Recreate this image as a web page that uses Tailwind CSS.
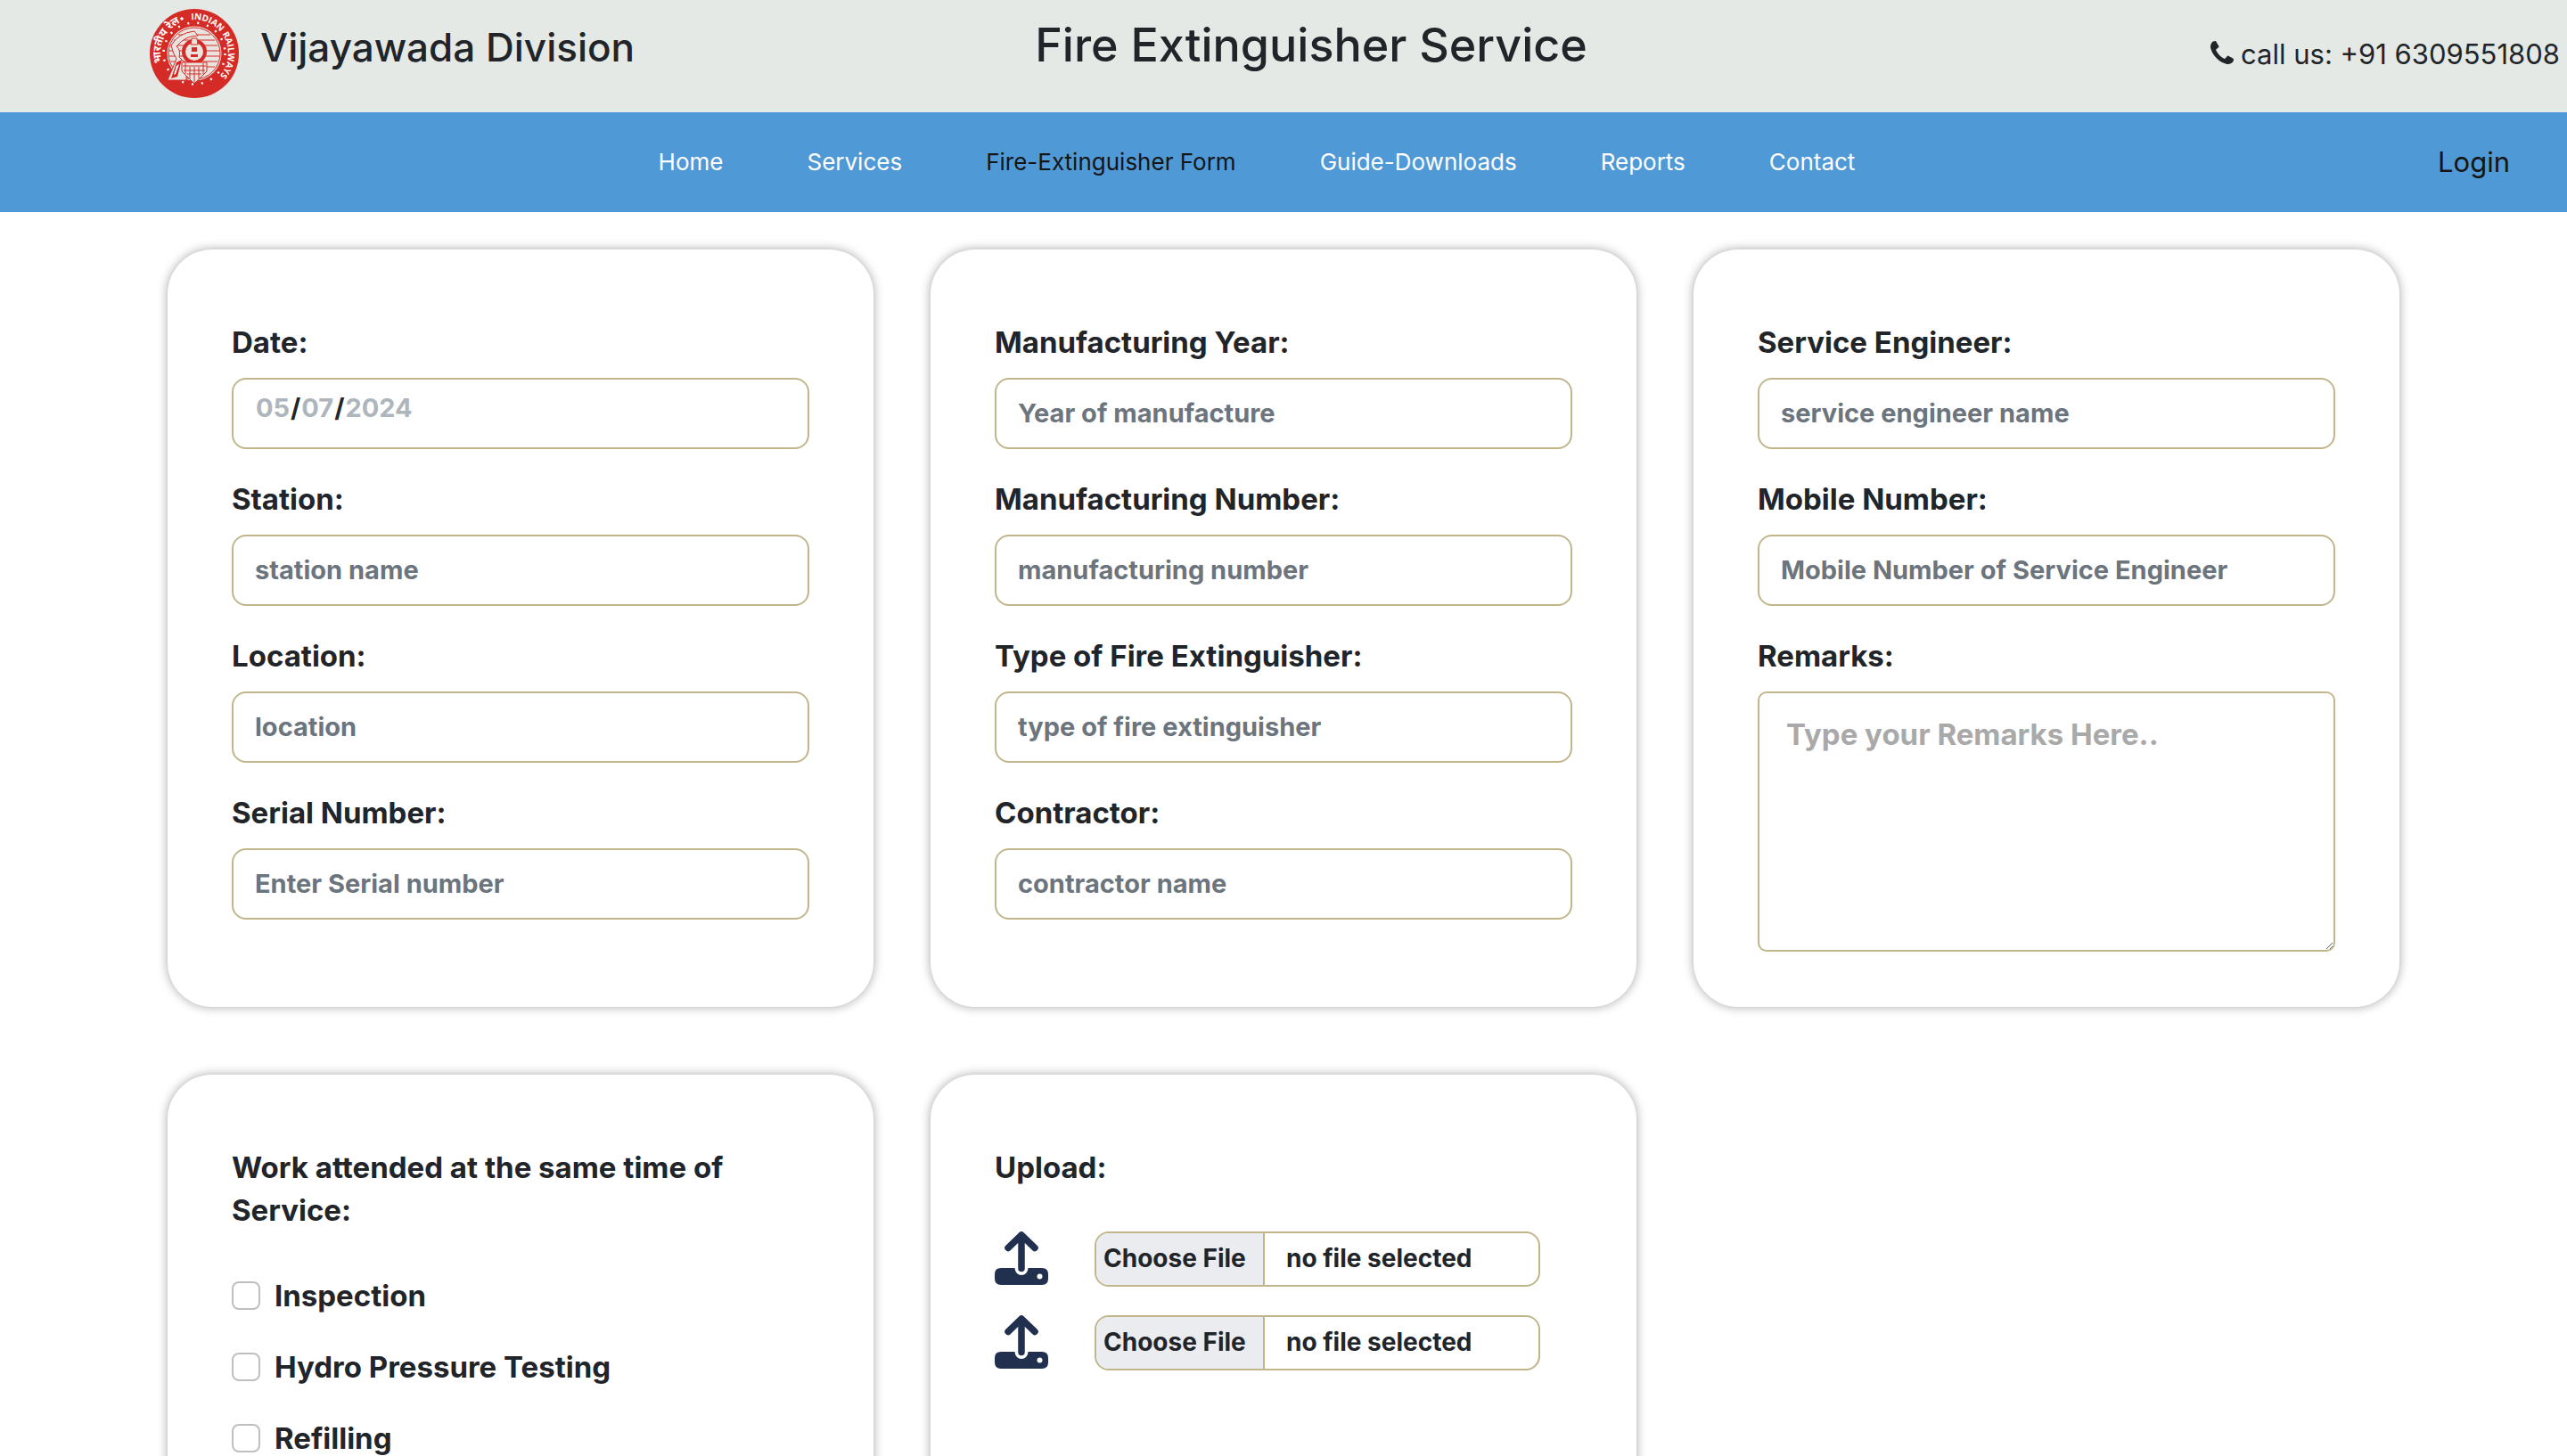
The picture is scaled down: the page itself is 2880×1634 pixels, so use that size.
<!DOCTYPE html>
<html lang="en-US">
<head>
<meta charset="utf-8">
<meta name="viewport" content="width=device-width, initial-scale=1">
<title>Fire Extinguisher Service</title>
<script src="https://cdn.jsdelivr.net/npm/@tailwindcss/browser@4"></script>
</head>
<body class="bg-white font-['Inter','Liberation_Sans',sans-serif] text-[#212529]">

<header class="grid h-[126px] grid-cols-[1fr_auto_1fr] bg-[#e4e9e5] pr-2 pl-[70px]">
  <div class="ml-[98px] flex items-start gap-6 pt-[10px]">
    <svg class="size-[100px] shrink-0" viewBox="0 0 100 100" role="img" aria-label="Indian Railways logo">
      <defs>
        <path id="ring-right" d="M12 50A38 38 0 0 1 88 50A38 38 0 0 1 50 88"/>
        <path id="ring-left" d="M50 88A38 38 0 0 1 12 50A38 38 0 0 1 50 12"/>
      </defs>
      <circle cx="50" cy="50" r="50" fill="#d52b27"/>
      <text font-family="Open Sans, sans-serif" font-weight="700" font-size="10" fill="#fff"><textPath href="#ring-right" startOffset="56">INDIAN RAILWAYS</textPath></text>
      <text font-family="Noto Sans Devanagari, Noto Sans, sans-serif" font-weight="700" font-size="12" fill="#fff"><textPath href="#ring-left" startOffset="49">भारतीय रेल</textPath></text>
      <circle cx="36" cy="11" r="1.8" fill="#fff"/>
      <circle cx="50" cy="50" r="34.500" fill="none" stroke="#fff" stroke-width="2.500" stroke-dasharray="2 9.040"/>
      <circle cx="50" cy="50" r="30.500" fill="#e9e4e0"/>
      <circle cx="50" cy="50" r="29" fill="none" stroke="#d52b27" stroke-width="1"/>
      <path d="M32 29H68M27 35H73M24 41H76M22 47H78M22 53H78M24 59H76M27 65H73" stroke="#d52b27" stroke-width="1"/>
      <path d="M24 41Q32 27 50 25L54 30Q40 30 30 42Q35 46 33 54L41 62V80H20L30 56Q26 50 24 41Z" fill="#e9e4e0" stroke="#d52b27" stroke-width="1"/>
      <circle cx="50" cy="48" r="14" fill="#d52b27"/>
      <circle cx="50" cy="48" r="10" fill="#e9e4e0"/>
      <path d="M47 33H53L54 40H46Z" fill="#e9e4e0" stroke="#d52b27"/>
      <path d="M47 43H53V48H47ZM46 51H54V54H46Z" fill="#d52b27"/>
      <path d="M36 60H64V70L50 84L36 70Z" fill="#e9e4e0" stroke="#d52b27"/>
      <path d="M37 64H63M38 69H62M42 73H58M40 61V73M45 65V78M50 65V83M55 65V78M60 61V73" stroke="#d52b27"/>
      <path d="M30 60L36 57L31 76L24 78Z" fill="#d52b27"/>
      <path d="M30 64L33 62L29 73L27 74Z" fill="#fff"/>
    </svg>
    <p class="pt-2 text-[44px] leading-[70px] font-medium whitespace-nowrap">Vijayawada Division</p>
  </div>
  <h1 class="pt-4 text-[52px] leading-[70px] font-medium whitespace-nowrap">Fire Extinguisher Service</h1>
  <p class="flex items-start justify-end gap-2 pt-9 text-[31px] leading-[50px] whitespace-nowrap">
    <svg class="mt-[10px] size-[26px]" viewBox="192 128 1408 1408" fill="currentColor" aria-hidden="true"><path d="M1600 1240q0 27-10 70.500t-21 68.500q-21 50-122 106-94 51-186 51-27 0-53-3.500t-57.500-12.500-47-14.500-55.500-20.500-49-18q-98-35-175-83-127-79-264-216t-216-264q-48-77-83-175-3-9-18-49t-20.500-55.500-14.500-47-12.500-57.500-3.500-53q0-92 51-186 56-101 106-122 25-11 68.500-21t70.500-10q14 0 21 3 18 6 53 76 11 19 30 54t35 63.500 31 53.500q3 4 17.500 25t21.500 35.500 7 28.500q0 20-28.500 50t-62 55-62 53-28.500 46q0 9 5 22.500t8.500 20.500 14 24 11.500 19q76 137 174 235t235 174q2 1 19 11.500t24 14 20.500 8.500 22.500 5q18 0 46-28.500t53-62 55-62 50-28.500q14 0 28.500 7t35.500 21.500 25 17.500q25 15 53.500 31t63.500 35 54 30q70 35 76 53 3 7 3 21z"/></svg>
    <span>call us: +91 6309551808</span>
  </p>
</header>

<nav class="grid h-28 grid-cols-[1fr_auto_1fr] items-center bg-[#4f9ad6] pr-16 pl-1 text-[26px] leading-[40px] text-white">
  <div class="col-start-2 flex gap-[94px] whitespace-nowrap">
    <a href="#home">Home</a>
    <a href="#services">Services</a>
    <a href="#form" class="text-[#151515]" aria-current="page">Fire-Extinguisher Form</a>
    <a href="#downloads">Guide-Downloads</a>
    <a href="#reports">Reports</a>
    <a href="#contact">Contact</a>
  </div>
  <a href="#login" class="justify-self-end text-[31px] text-[#151515]">Login</a>
</nav>

<main class="px-[188px] pt-[42px]">
  <form class="grid grid-cols-3 gap-x-16 gap-y-[76px] text-[33px] leading-[48px] font-bold">

    <section class="flex min-h-[850px] flex-col gap-8 rounded-[50px] px-[72px] pt-20 pb-[60px] shadow-[0_0_12px_rgba(0,0,0,0.35)]">
      <div class="flex flex-col gap-4">
        <label for="date">Date:</label>
        <input id="date" type="date" value="2024-05-07" class="h-20 w-full rounded-2xl border-2 border-[#c0b58b] px-6 pb-3 text-[29px] text-[#212529] [&::-webkit-calendar-picker-indicator]:hidden [&::-webkit-datetime-edit-day-field]:text-[#adb5bd] [&::-webkit-datetime-edit-month-field]:text-[#adb5bd] [&::-webkit-datetime-edit-year-field]:text-[#adb5bd]">
      </div>
      <div class="flex flex-col gap-4">
        <label for="station">Station:</label>
        <input id="station" type="text" placeholder="station name" class="h-20 w-full rounded-2xl border-2 border-[#c0b58b] px-6 pb-0.5 text-[29px] placeholder:text-[#6c757d]">
      </div>
      <div class="flex flex-col gap-4">
        <label for="location">Location:</label>
        <input id="location" type="text" placeholder="location" class="h-20 w-full rounded-2xl border-2 border-[#c0b58b] px-6 pb-0.5 text-[29px] placeholder:text-[#6c757d]">
      </div>
      <div class="flex flex-col gap-4">
        <label for="serial">Serial Number:</label>
        <input id="serial" type="text" placeholder="Enter Serial number" class="h-20 w-full rounded-2xl border-2 border-[#c0b58b] px-6 pb-0.5 text-[29px] placeholder:text-[#6c757d]">
      </div>
    </section>

    <section class="flex min-h-[850px] flex-col gap-8 rounded-[50px] px-[72px] pt-20 pb-[60px] shadow-[0_0_12px_rgba(0,0,0,0.35)]">
      <div class="flex flex-col gap-4">
        <label for="mfg-year">Manufacturing Year:</label>
        <input id="mfg-year" type="text" placeholder="Year of manufacture" class="h-20 w-full rounded-2xl border-2 border-[#c0b58b] px-6 pb-0.5 text-[29px] placeholder:text-[#6c757d]">
      </div>
      <div class="flex flex-col gap-4">
        <label for="mfg-number">Manufacturing Number:</label>
        <input id="mfg-number" type="text" placeholder="manufacturing number" class="h-20 w-full rounded-2xl border-2 border-[#c0b58b] px-6 pb-0.5 text-[29px] placeholder:text-[#6c757d]">
      </div>
      <div class="flex flex-col gap-4">
        <label for="type">Type of Fire Extinguisher:</label>
        <input id="type" type="text" placeholder="type of fire extinguisher" class="h-20 w-full rounded-2xl border-2 border-[#c0b58b] px-6 pb-0.5 text-[29px] placeholder:text-[#6c757d]">
      </div>
      <div class="flex flex-col gap-4">
        <label for="contractor">Contractor:</label>
        <input id="contractor" type="text" placeholder="contractor name" class="h-20 w-full rounded-2xl border-2 border-[#c0b58b] px-6 pb-0.5 text-[29px] placeholder:text-[#6c757d]">
      </div>
    </section>

    <section class="flex min-h-[850px] flex-col gap-8 rounded-[50px] px-[72px] pt-20 pb-[60px] shadow-[0_0_12px_rgba(0,0,0,0.35)]">
      <div class="flex flex-col gap-4">
        <label for="engineer">Service Engineer:</label>
        <input id="engineer" type="text" placeholder="service engineer name" class="h-20 w-full rounded-2xl border-2 border-[#c0b58b] px-6 pb-0.5 text-[29px] placeholder:text-[#6c757d]">
      </div>
      <div class="flex flex-col gap-4">
        <label for="mobile">Mobile Number:</label>
        <input id="mobile" type="tel" placeholder="Mobile Number of Service Engineer" class="h-20 w-full rounded-2xl border-2 border-[#c0b58b] px-6 pb-0.5 text-[29px] placeholder:text-[#6c757d]">
      </div>
      <div class="flex flex-col gap-4">
        <label for="remarks">Remarks:</label>
        <textarea id="remarks" placeholder="Type your Remarks Here.." class="h-[292px] w-full rounded-[10px] border-2 border-[#c0b58b] px-[30px] py-[22px] placeholder:text-[#a9a9a9]"></textarea>
      </div>
    </section>

    <section class="flex min-h-[850px] flex-col gap-12 rounded-[50px] px-[72px] pt-20 pb-[60px] shadow-[0_0_12px_rgba(0,0,0,0.35)]">
      <h2>Work attended at the same time of Service:</h2>
      <div class="flex flex-col gap-8">
        <label class="flex items-center gap-4"><input type="checkbox" class="size-8 appearance-none rounded-lg border-2 border-[#bfbfbf] checked:bg-[#4f9ad6]">Inspection</label>
        <label class="flex items-center gap-4"><input type="checkbox" class="size-8 appearance-none rounded-lg border-2 border-[#bfbfbf] checked:bg-[#4f9ad6]">Hydro Pressure Testing</label>
        <label class="flex items-center gap-4"><input type="checkbox" class="size-8 appearance-none rounded-lg border-2 border-[#bfbfbf] checked:bg-[#4f9ad6]">Refilling</label>
      </div>
    </section>

    <section class="flex min-h-[850px] flex-col gap-12 rounded-[50px] px-[72px] pt-20 pb-[60px] shadow-[0_0_12px_rgba(0,0,0,0.35)]">
      <h2>Upload:</h2>
      <div class="flex flex-col gap-8">
        <div class="flex items-start gap-[52px]">
          <svg class="size-[60px] shrink-0" viewBox="0 0 60 60" fill="none" aria-hidden="true">
            <path d="M7 41H22.500A7.500 8 0 0 0 37.500 41H53Q60 41 60 48V53Q60 60 53 60H7Q0 60 0 53V48Q0 41 7 41Z" fill="#22304f"/>
            <circle cx="50.500" cy="50.500" r="3" fill="#fff"/>
            <path d="M30 5V41.500M15 18.500L30 4L45 18.500" stroke="#22304f" stroke-width="7.500" stroke-linecap="round" stroke-linejoin="round"/>
          </svg>
          <label class="relative flex h-[62px] w-[500px] items-stretch overflow-hidden rounded-2xl border-2 border-[#c0b58b] text-[28px] leading-[56px]">
            <span class="w-[189px] border-r-2 border-[#c0b58b] bg-[#eaecf0] pl-2 whitespace-nowrap">Choose File</span>
            <span class="pl-6">no file selected</span>
            <input type="file" class="absolute inset-0 opacity-0">
          </label>
        </div>
        <div class="flex items-start gap-[52px]">
          <svg class="size-[60px] shrink-0" viewBox="0 0 60 60" fill="none" aria-hidden="true">
            <path d="M7 41H22.500A7.500 8 0 0 0 37.500 41H53Q60 41 60 48V53Q60 60 53 60H7Q0 60 0 53V48Q0 41 7 41Z" fill="#22304f"/>
            <circle cx="50.500" cy="50.500" r="3" fill="#fff"/>
            <path d="M30 5V41.500M15 18.500L30 4L45 18.500" stroke="#22304f" stroke-width="7.500" stroke-linecap="round" stroke-linejoin="round"/>
          </svg>
          <label class="relative flex h-[62px] w-[500px] items-stretch overflow-hidden rounded-2xl border-2 border-[#c0b58b] text-[28px] leading-[56px]">
            <span class="w-[189px] border-r-2 border-[#c0b58b] bg-[#eaecf0] pl-2 whitespace-nowrap">Choose File</span>
            <span class="pl-6">no file selected</span>
            <input type="file" class="absolute inset-0 opacity-0">
          </label>
        </div>
      </div>
    </section>

  </form>
</main>
</body>
</html>
